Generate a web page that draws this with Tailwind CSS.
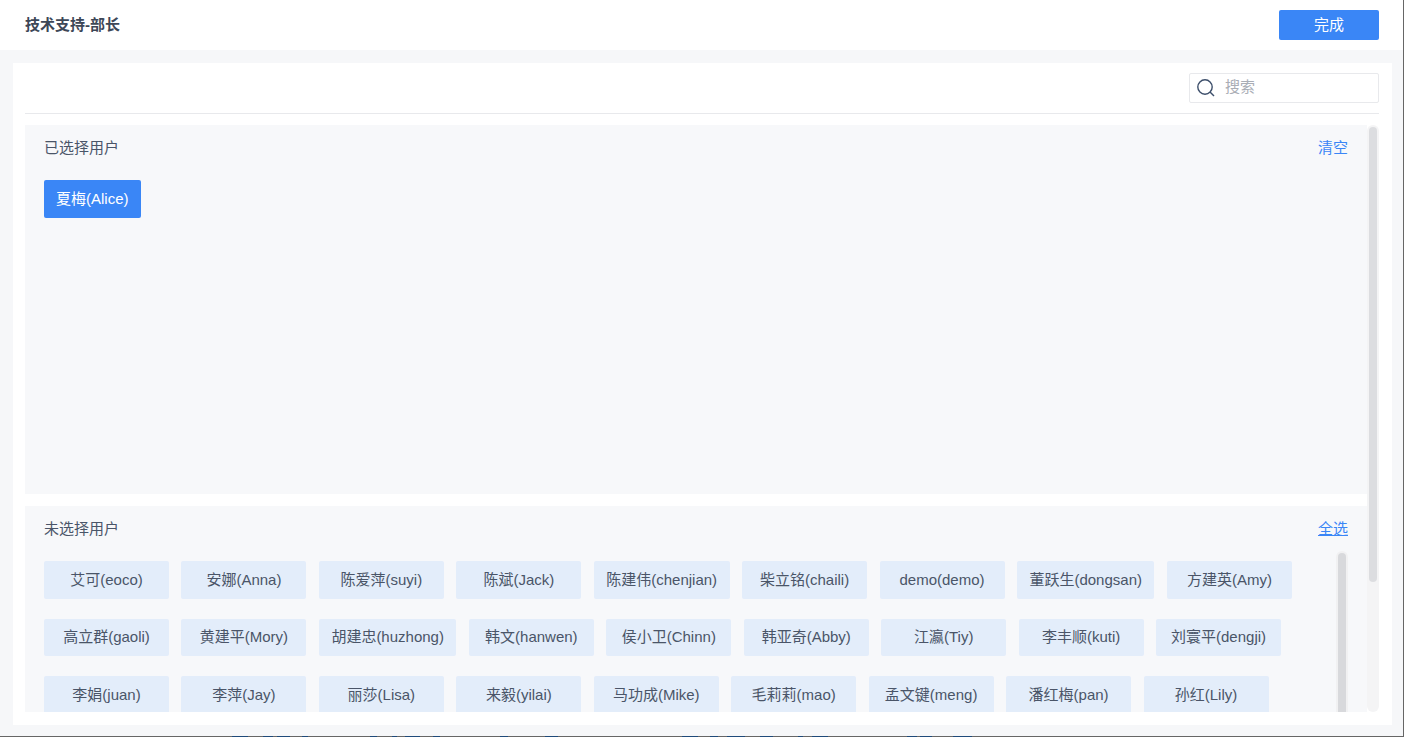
<!DOCTYPE html>
<html lang="zh-CN">
<head>
  <meta charset="UTF-8" />
  <meta name="viewport" content="width=device-width, initial-scale=1.0"/>
  <title>技术支持-部长</title>
  <script src="https://cdn.jsdelivr.net/npm/@tailwindcss/browser@4"></script>
</head>
<body class="h-[737px] overflow-hidden bg-white font-['Liberation_Sans','Noto_Sans_CJK_SC',sans-serif] text-[15px] text-[#4a5568]">
  <div class="relative flex h-[737px] w-[1404px] flex-col border-r border-b border-[#666666] bg-[#f6f7f9]">
    <!-- header -->
    <header class="flex h-[50px] shrink-0 items-center justify-between bg-white pl-[25px] pr-[24px]">
      <h1 class="text-[15px] font-semibold text-[#3d4757]">技术支持-部长</h1>
      <button class="h-[30px] w-[100px] rounded-[2px] bg-[#3a86f6] text-[15px] text-white">完成</button>
    </header>

    <main class="ml-[13px] mt-[13px] flex h-[662px] w-[1379px] flex-col bg-white pl-3 pr-[13px] pt-[10px]">
      <!-- search -->
      <div class="flex h-[41px] shrink-0 justify-end border-b border-[#e8e9ec]">
        <div class="flex h-[30px] w-[190px] items-center rounded-[2px] border border-[#e8e9ec] pl-[7px]">
          <svg class="h-[18px] w-[18px]" viewBox="0 0 18 18" fill="none" stroke="#3d4f6b" stroke-width="1.4">
            <circle cx="8" cy="8" r="7.2"/>
            <path d="M13 13l4 4"/>
          </svg>
          <span class="ml-[10px] pb-[2px] text-[#a9adb5]">搜索</span>
        </div>
      </div>

      <!-- scroll area -->
      <div class="relative mt-[11px] h-[587px] overflow-hidden">
        <div class="w-[1342px]">
          <section class="h-[369px] bg-[#f7f8fa] px-[19px] pt-[13px]">
            <div class="flex h-[20px] items-center justify-between">
              <span>已选择用户</span>
              <a class="text-[#3a86f6]">清空</a>
            </div>
            <div class="mt-[22px] flex">
              <span class="flex h-[38px] items-center rounded-[2px] bg-[#3a86f6] px-3 text-white">夏梅(Alice)</span>
            </div>
          </section>

          <section class="mt-3 bg-[#f7f8fa] px-[19px] pt-[13px]">
            <div class="flex h-[20px] items-center justify-between">
              <span>未选择用户</span>
              <a class="text-[#3a86f6] underline">全选</a>
            </div>
            <div class="relative mt-[12px] h-[331px] overflow-hidden">
              <div class="flex w-[1292px] flex-wrap gap-x-[12.45px] gap-y-[20px] pt-[10px]">
                <span class="flex h-[37.5px] min-w-[125px] items-center justify-center rounded-[2px] bg-[#e3edfa] px-[12.5px]">艾可(eoco)</span>
                <span class="flex h-[37.5px] min-w-[125px] items-center justify-center rounded-[2px] bg-[#e3edfa] px-[12.5px]">安娜(Anna)</span>
                <span class="flex h-[37.5px] min-w-[125px] items-center justify-center rounded-[2px] bg-[#e3edfa] px-[12.5px]">陈爱萍(suyi)</span>
                <span class="flex h-[37.5px] min-w-[125px] items-center justify-center rounded-[2px] bg-[#e3edfa] px-[12.5px]">陈斌(Jack)</span>
                <span class="flex h-[37.5px] min-w-[125px] items-center justify-center rounded-[2px] bg-[#e3edfa] px-[12.5px]">陈建伟(chenjian)</span>
                <span class="flex h-[37.5px] min-w-[125px] items-center justify-center rounded-[2px] bg-[#e3edfa] px-[12.5px]">柴立铭(chaili)</span>
                <span class="flex h-[37.5px] min-w-[125px] items-center justify-center rounded-[2px] bg-[#e3edfa] px-[12.5px]">demo(demo)</span>
                <span class="flex h-[37.5px] min-w-[125px] items-center justify-center rounded-[2px] bg-[#e3edfa] px-[12.5px]">董跃生(dongsan)</span>
                <span class="flex h-[37.5px] min-w-[125px] items-center justify-center rounded-[2px] bg-[#e3edfa] px-[12.5px]">方建英(Amy)</span>
                <span class="flex h-[37.5px] min-w-[125px] items-center justify-center rounded-[2px] bg-[#e3edfa] px-[12.5px]">高立群(gaoli)</span>
                <span class="flex h-[37.5px] min-w-[125px] items-center justify-center rounded-[2px] bg-[#e3edfa] px-[12.5px]">黄建平(Mory)</span>
                <span class="flex h-[37.5px] min-w-[125px] items-center justify-center rounded-[2px] bg-[#e3edfa] px-[12.5px]">胡建忠(huzhong)</span>
                <span class="flex h-[37.5px] min-w-[125px] items-center justify-center rounded-[2px] bg-[#e3edfa] px-[12.5px]">韩文(hanwen)</span>
                <span class="flex h-[37.5px] min-w-[125px] items-center justify-center rounded-[2px] bg-[#e3edfa] px-[12.5px]">侯小卫(Chinn)</span>
                <span class="flex h-[37.5px] min-w-[125px] items-center justify-center rounded-[2px] bg-[#e3edfa] px-[12.5px]">韩亚奇(Abby)</span>
                <span class="flex h-[37.5px] min-w-[125px] items-center justify-center rounded-[2px] bg-[#e3edfa] px-[12.5px]">江瀛(Tiy)</span>
                <span class="flex h-[37.5px] min-w-[125px] items-center justify-center rounded-[2px] bg-[#e3edfa] px-[12.5px]">李丰顺(kuti)</span>
                <span class="flex h-[37.5px] min-w-[125px] items-center justify-center rounded-[2px] bg-[#e3edfa] px-[12.5px]">刘寰平(dengji)</span>
                <span class="flex h-[37.5px] min-w-[125px] items-center justify-center rounded-[2px] bg-[#e3edfa] px-[12.5px]">李娟(juan)</span>
                <span class="flex h-[37.5px] min-w-[125px] items-center justify-center rounded-[2px] bg-[#e3edfa] px-[12.5px]">李萍(Jay)</span>
                <span class="flex h-[37.5px] min-w-[125px] items-center justify-center rounded-[2px] bg-[#e3edfa] px-[12.5px]">丽莎(Lisa)</span>
                <span class="flex h-[37.5px] min-w-[125px] items-center justify-center rounded-[2px] bg-[#e3edfa] px-[12.5px]">来毅(yilai)</span>
                <span class="flex h-[37.5px] min-w-[125px] items-center justify-center rounded-[2px] bg-[#e3edfa] px-[12.5px]">马功成(Mike)</span>
                <span class="flex h-[37.5px] min-w-[125px] items-center justify-center rounded-[2px] bg-[#e3edfa] px-[12.5px]">毛莉莉(mao)</span>
                <span class="flex h-[37.5px] min-w-[125px] items-center justify-center rounded-[2px] bg-[#e3edfa] px-[12.5px]">孟文键(meng)</span>
                <span class="flex h-[37.5px] min-w-[125px] items-center justify-center rounded-[2px] bg-[#e3edfa] px-[12.5px]">潘红梅(pan)</span>
                <span class="flex h-[37.5px] min-w-[125px] items-center justify-center rounded-[2px] bg-[#e3edfa] px-[12.5px]">孙红(Lily)</span>
              </div>
              <!-- inner scrollbar -->
              <div class="absolute right-0 top-0 h-[331px] w-3 rounded-md bg-[#f1f1f2] px-0.5 pt-0.5">
                <div class="h-[300px] rounded-md bg-[#d8d9dc]"></div>
              </div>
            </div>
          </section>
        </div>
        <!-- outer scrollbar -->
        <div class="absolute right-0 top-0 h-[587px] w-3 rounded-md bg-[#f4f4f5] px-0.5 pt-0.5">
          <div class="h-[455px] rounded-md bg-[#dcdde0]"></div>
        </div>
      </div>
    </main>

    <!-- page behind the dialog, showing through on the last pixel row -->
    <svg class="absolute bottom-[-1px] left-0 h-px w-[1404px]" viewBox="0 0 1404 1" fill="#1f4a7a">
      <rect x="232" width="16" height="1"/><rect x="263" width="10" height="1"/><rect x="277" width="13" height="1"/><rect x="302" width="6" height="1"/>
      <rect x="370" width="7" height="1"/><rect x="392" width="5" height="1"/><rect x="405" width="15" height="1"/><rect x="433" width="7" height="1"/>
      <rect x="500" width="8" height="1"/><rect x="545" width="13" height="1"/><rect x="682" width="16" height="1"/><rect x="710" width="8" height="1"/>
      <rect x="727" width="18" height="1"/><rect x="760" width="13" height="1"/><rect x="798" width="5" height="1"/><rect x="812" width="16" height="1"/>
      <rect x="907" width="10" height="1"/><rect x="920" width="12" height="1"/><rect x="953" width="19" height="1"/>
    </svg>
  </div>
</body>
</html>
